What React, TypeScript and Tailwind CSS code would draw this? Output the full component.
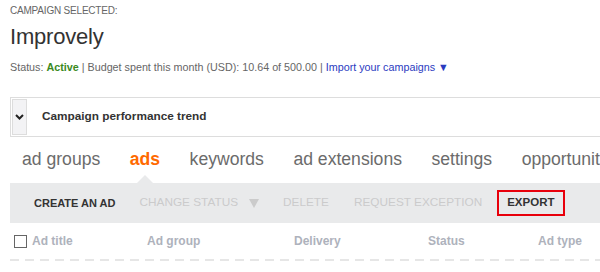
import React from 'react';

// --- Data ---
const tabs = ['ad groups', 'ads', 'keywords', 'ad extensions', 'settings', 'opportunities'];
const columns = [
  { label: 'Ad group', w: 'w-[147px]' },
  { label: 'Delivery', w: 'w-[134px]' },
  { label: 'Status', w: 'w-[110px]' },
  { label: 'Ad type', w: 'w-auto' },
];

const App: React.FC = () => {
  return (
    <div className="w-[600px] h-[272px] overflow-hidden bg-white pl-[10px] font-['Liberation_Sans',Arial,sans-serif]">
      {/* Campaign header */}
      <div className="pt-[5px] text-[10px] leading-[12px] text-[#666] tracking-[-0.2px]">CAMPAIGN SELECTED:</div>
      <h1 className="mt-[7px] text-[22px] leading-[26px] text-[#333] tracking-[-0.2px]">Improvely</h1>
      <div className="mt-[11px] text-[10.75px] leading-[13px] text-[#666] whitespace-nowrap">
        Status: <span className="text-[#3b8a1e] font-bold">Active</span> | Budget spent this month (USD): 10.64 of 500.00 |{' '}
        <span className="text-[#2b3bbf]">Import your campaigns ▼</span>
      </div>

      {/* Performance trend panel */}
      <div className="mt-[23px] w-[620px] h-[40px] border border-[#ddd] flex items-center">
        <div className="ml-px w-[15px] h-[36px] bg-[#f3f3f5] border border-[#ddd] flex items-center justify-center">
          <svg width="9" height="6" viewBox="0 0 9 6">
            <path d="M1 1 L4.5 4.5 L8 1" fill="none" stroke="#222" strokeWidth="2" />
          </svg>
        </div>
        <span className="ml-[15px] text-[11.8px] font-bold text-[#333]">Campaign performance trend</span>
      </div>

      {/* Tabs */}
      <div className="mt-[10px] h-[36px] pl-[12px] flex gap-[29.5px] whitespace-nowrap text-[17.6px] leading-[24px] text-[#6b6b6b]">
        {tabs.map((t) => (
          <span key={t} className={t === 'ads' ? 'relative text-[#ff6a00] font-bold' : ''}>
            {t}
            {t === 'ads' && (
              <span className="absolute left-1/2 -translate-x-1/2 top-[28px] w-0 h-0 border-l-[8px] border-r-[8px] border-b-[8px] border-l-transparent border-r-transparent border-b-[#e9eaeb]" />
            )}
          </span>
        ))}
      </div>

      {/* Toolbar */}
      <div className="w-[600px] h-[40px] bg-[#e9eaeb] flex items-center pl-[12px] text-[11.8px] text-[#cbcbcb] whitespace-nowrap">
        <span className="px-3 text-[11px] font-bold text-[#333]">CREATE AN AD</span>
        <span className="px-3 flex items-center">
          CHANGE STATUS
          <svg className="ml-[11px]" width="10" height="9" viewBox="0 0 10 9">
            <path d="M0 0 H10 L5 9 Z" fill="currentColor" />
          </svg>
        </span>
        <span className="px-3">DELETE</span>
        <span className="px-3 ml-px">REQUEST EXCEPTION</span>
        <span className="ml-[3px] border-2 border-[#e8000b] px-[8px] h-[26px] flex items-center text-[11.5px] font-bold text-[#333]">EXPORT</span>
      </div>

      {/* Table header */}
      <div className="h-[36px] flex items-center text-[12px] font-bold text-[#aeb2bc] whitespace-nowrap">
        <div className="w-[137px] flex items-center">
          <span className="ml-[4px] w-[13px] h-[13px] border border-[#666] bg-white" />
          <span className="ml-[5px]">Ad title</span>
        </div>
        {columns.map((c) => (
          <div key={c.label} className={c.w}>{c.label}</div>
        ))}
      </div>
      <div className="w-[600px] h-[2px] bg-[repeating-linear-gradient(90deg,#e6e6e6_0_9px,transparent_9px_15px)]" />
    </div>
  );
};

export default App;
